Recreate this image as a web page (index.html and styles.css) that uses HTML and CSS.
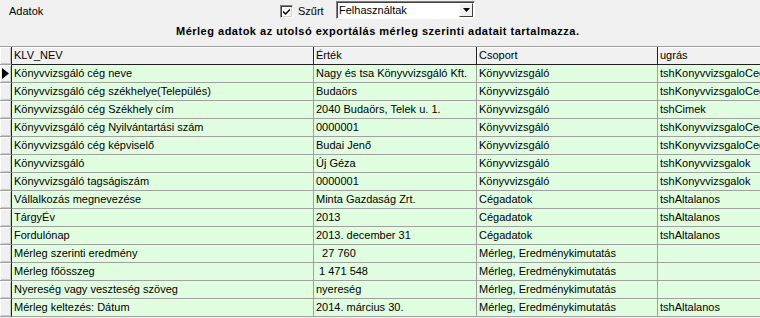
FILE: index.html
```html
<!DOCTYPE html>
<html>
<head>
<meta charset="utf-8">
<link rel="stylesheet" href="styles.css">
</head>
<body>
<div class="toolbar">
  <span class="label">Adatok</span>
  <span class="check">
    <svg width="9" height="9" viewBox="0 0 9 9"><path d="M1 3.5 L3.5 6 L8 1.5 L8 3.5 L3.5 8 L1 5.5 Z" fill="#000"/></svg>
  </span>
  <span class="szurt">Szűrt</span>
  <span class="combo">
    <span class="combo-text">Felhasználtak</span>
    <span class="combo-btn"><svg width="7" height="4" viewBox="0 0 7 4"><path d="M0 0 H7 L3.5 4 Z" fill="#000"/></svg></span>
  </span>
</div>
<div class="caption">Mérleg adatok az utolsó exportálás mérleg szerinti adatait tartalmazza.</div>
<div class="grid">
  <div class="hd ind"></div><div class="hd">KLV_NEV</div><div class="hd">Érték</div><div class="hd">Csoport</div><div class="hd last">ugrás</div>

  <div class="ind"><svg width="7" height="11" viewBox="0 0 7 11"><path d="M0 0 L7 5.5 L0 11 Z" fill="#000"/></svg></div><div class="c">Könyvvizsgáló cég neve</div><div class="c">Nagy és tsa Könyvvizsgáló Kft.</div><div class="c">Könyvvizsgáló</div><div class="c last">tshKonyvvizsgaloCeg</div>
  <div class="ind"></div><div class="c">Könyvvizsgáló cég székhelye(Település)</div><div class="c">Budaörs</div><div class="c">Könyvvizsgáló</div><div class="c last">tshKonyvvizsgaloCeg</div>
  <div class="ind"></div><div class="c">Könyvvizsgáló cég Székhely cím</div><div class="c">2040 Budaörs, Telek u. 1.</div><div class="c">Könyvvizsgáló</div><div class="c last">tshCimek</div>
  <div class="ind"></div><div class="c">Könyvvizsgáló cég Nyilvántartási szám</div><div class="c">0000001</div><div class="c">Könyvvizsgáló</div><div class="c last">tshKonyvvizsgaloCeg</div>
  <div class="ind"></div><div class="c">Könyvvizsgáló cég képviselő</div><div class="c">Budai Jenő</div><div class="c">Könyvvizsgáló</div><div class="c last">tshKonyvvizsgaloCeg</div>
  <div class="ind"></div><div class="c">Könyvvizsgáló</div><div class="c">Új Géza</div><div class="c">Könyvvizsgáló</div><div class="c last">tshKonyvvizsgalok</div>
  <div class="ind"></div><div class="c">Könyvvizsgáló tagságiszám</div><div class="c">0000001</div><div class="c">Könyvvizsgáló</div><div class="c last">tshKonyvvizsgalok</div>
  <div class="ind"></div><div class="c">Vállalkozás megnevezése</div><div class="c">Minta Gazdaság Zrt.</div><div class="c">Cégadatok</div><div class="c last">tshAltalanos</div>
  <div class="ind"></div><div class="c">TárgyÉv</div><div class="c">2013</div><div class="c">Cégadatok</div><div class="c last">tshAltalanos</div>
  <div class="ind"></div><div class="c">Fordulónap</div><div class="c">2013. december 31</div><div class="c">Cégadatok</div><div class="c last">tshAltalanos</div>
  <div class="ind"></div><div class="c">Mérleg szerinti eredmény</div><div class="c">&nbsp; 27 760</div><div class="c">Mérleg, Eredménykimutatás</div><div class="c last"></div>
  <div class="ind"></div><div class="c">Mérleg főösszeg</div><div class="c">&nbsp;1 471 548</div><div class="c">Mérleg, Eredménykimutatás</div><div class="c last"></div>
  <div class="ind"></div><div class="c">Nyereség vagy veszteség szöveg</div><div class="c">nyereség</div><div class="c">Mérleg, Eredménykimutatás</div><div class="c last"></div>
  <div class="ind"></div><div class="c">Mérleg keltezés: Dátum</div><div class="c">2014. március 30.</div><div class="c">Mérleg, Eredménykimutatás</div><div class="c last">tshAltalanos</div>
</div>
</body>
</html>
```
FILE: styles.css
```css
html, body {
  margin: 0;
  padding: 0;
  background: #f0f0f0;
  font-family: "Liberation Sans", Arial, sans-serif;
  font-size: 11px;
  color: #000;
  overflow: hidden;
  width: 760px;
  height: 318px;
}
.toolbar {
  height: 22px;
  display: flex;
  align-items: center;
}
.label {
  margin-left: 9px;
  width: 271px;
}
.check {
  width: 11px;
  height: 11px;
  background: #fff;
  border-top: 1px solid #808080;
  border-left: 1px solid #808080;
  border-right: 1px solid #fff;
  border-bottom: 1px solid #fff;
  box-shadow: inset 1px 1px 0 #404040, inset -1px -1px 0 #d4d0c8;
  display: flex;
  align-items: center;
  justify-content: center;
  box-sizing: content-box;
}
.szurt {
  margin-left: 5px;
  width: 38px;
}
.combo {
  width: 137px;
  height: 16px;
  background: #fff;
  border-top: 1px solid #808080;
  border-left: 1px solid #808080;
  border-right: 1px solid #fff;
  border-bottom: 1px solid #fff;
  box-shadow: inset 1px 1px 0 #404040;
  display: flex;
  align-items: center;
  justify-content: space-between;
  margin-top: -2px;
}
.combo-text {
  padding-left: 2px;
}
.combo-btn {
  width: 14px;
  height: 14px;
  margin-right: 1px;
  background: #f0f0f0;
  border-top: 1px solid #fff;
  border-left: 1px solid #fff;
  border-right: 1px solid #404040;
  border-bottom: 1px solid #404040;
  box-sizing: border-box;
  display: flex;
  align-items: center;
  justify-content: center;
}
.caption {
  height: 24px;
  line-height: 18px;
  padding-left: 176px;
  font-weight: bold;
  letter-spacing: 0.5px;
}
.grid {
  display: grid;
  grid-template-columns: 12px 302px 163px 181px 102px;
  grid-auto-rows: 18px;
  border-top: 1px solid #a0a0a0;
}
.grid > div {
  box-sizing: border-box;
  border-right: 1px solid #a0a0a0;
  border-bottom: 1px solid #a0a0a0;
  overflow: hidden;
  white-space: nowrap;
  line-height: 17px;
  padding-left: 2px;
}
.grid > .c {
  background: #e0fde0;
}
.grid > .hd {
  background: #f0f0f0;
  border-right-color: #202020;
  border-bottom-color: #202020;
  box-shadow: inset 1px 1px 0 #fff;
}
.grid > .ind {
  padding-left: 0;
  background: #f0f0f0;
  border-right-color: #202020;
  border-bottom-color: #a0a0a0;
  box-shadow: inset 1px 1px 0 #fff, inset -1px -1px 0 #c8c8c8;
  display: flex;
  align-items: center;
  justify-content: center;
}
.grid > .last {
  border-right: none;
}
```
